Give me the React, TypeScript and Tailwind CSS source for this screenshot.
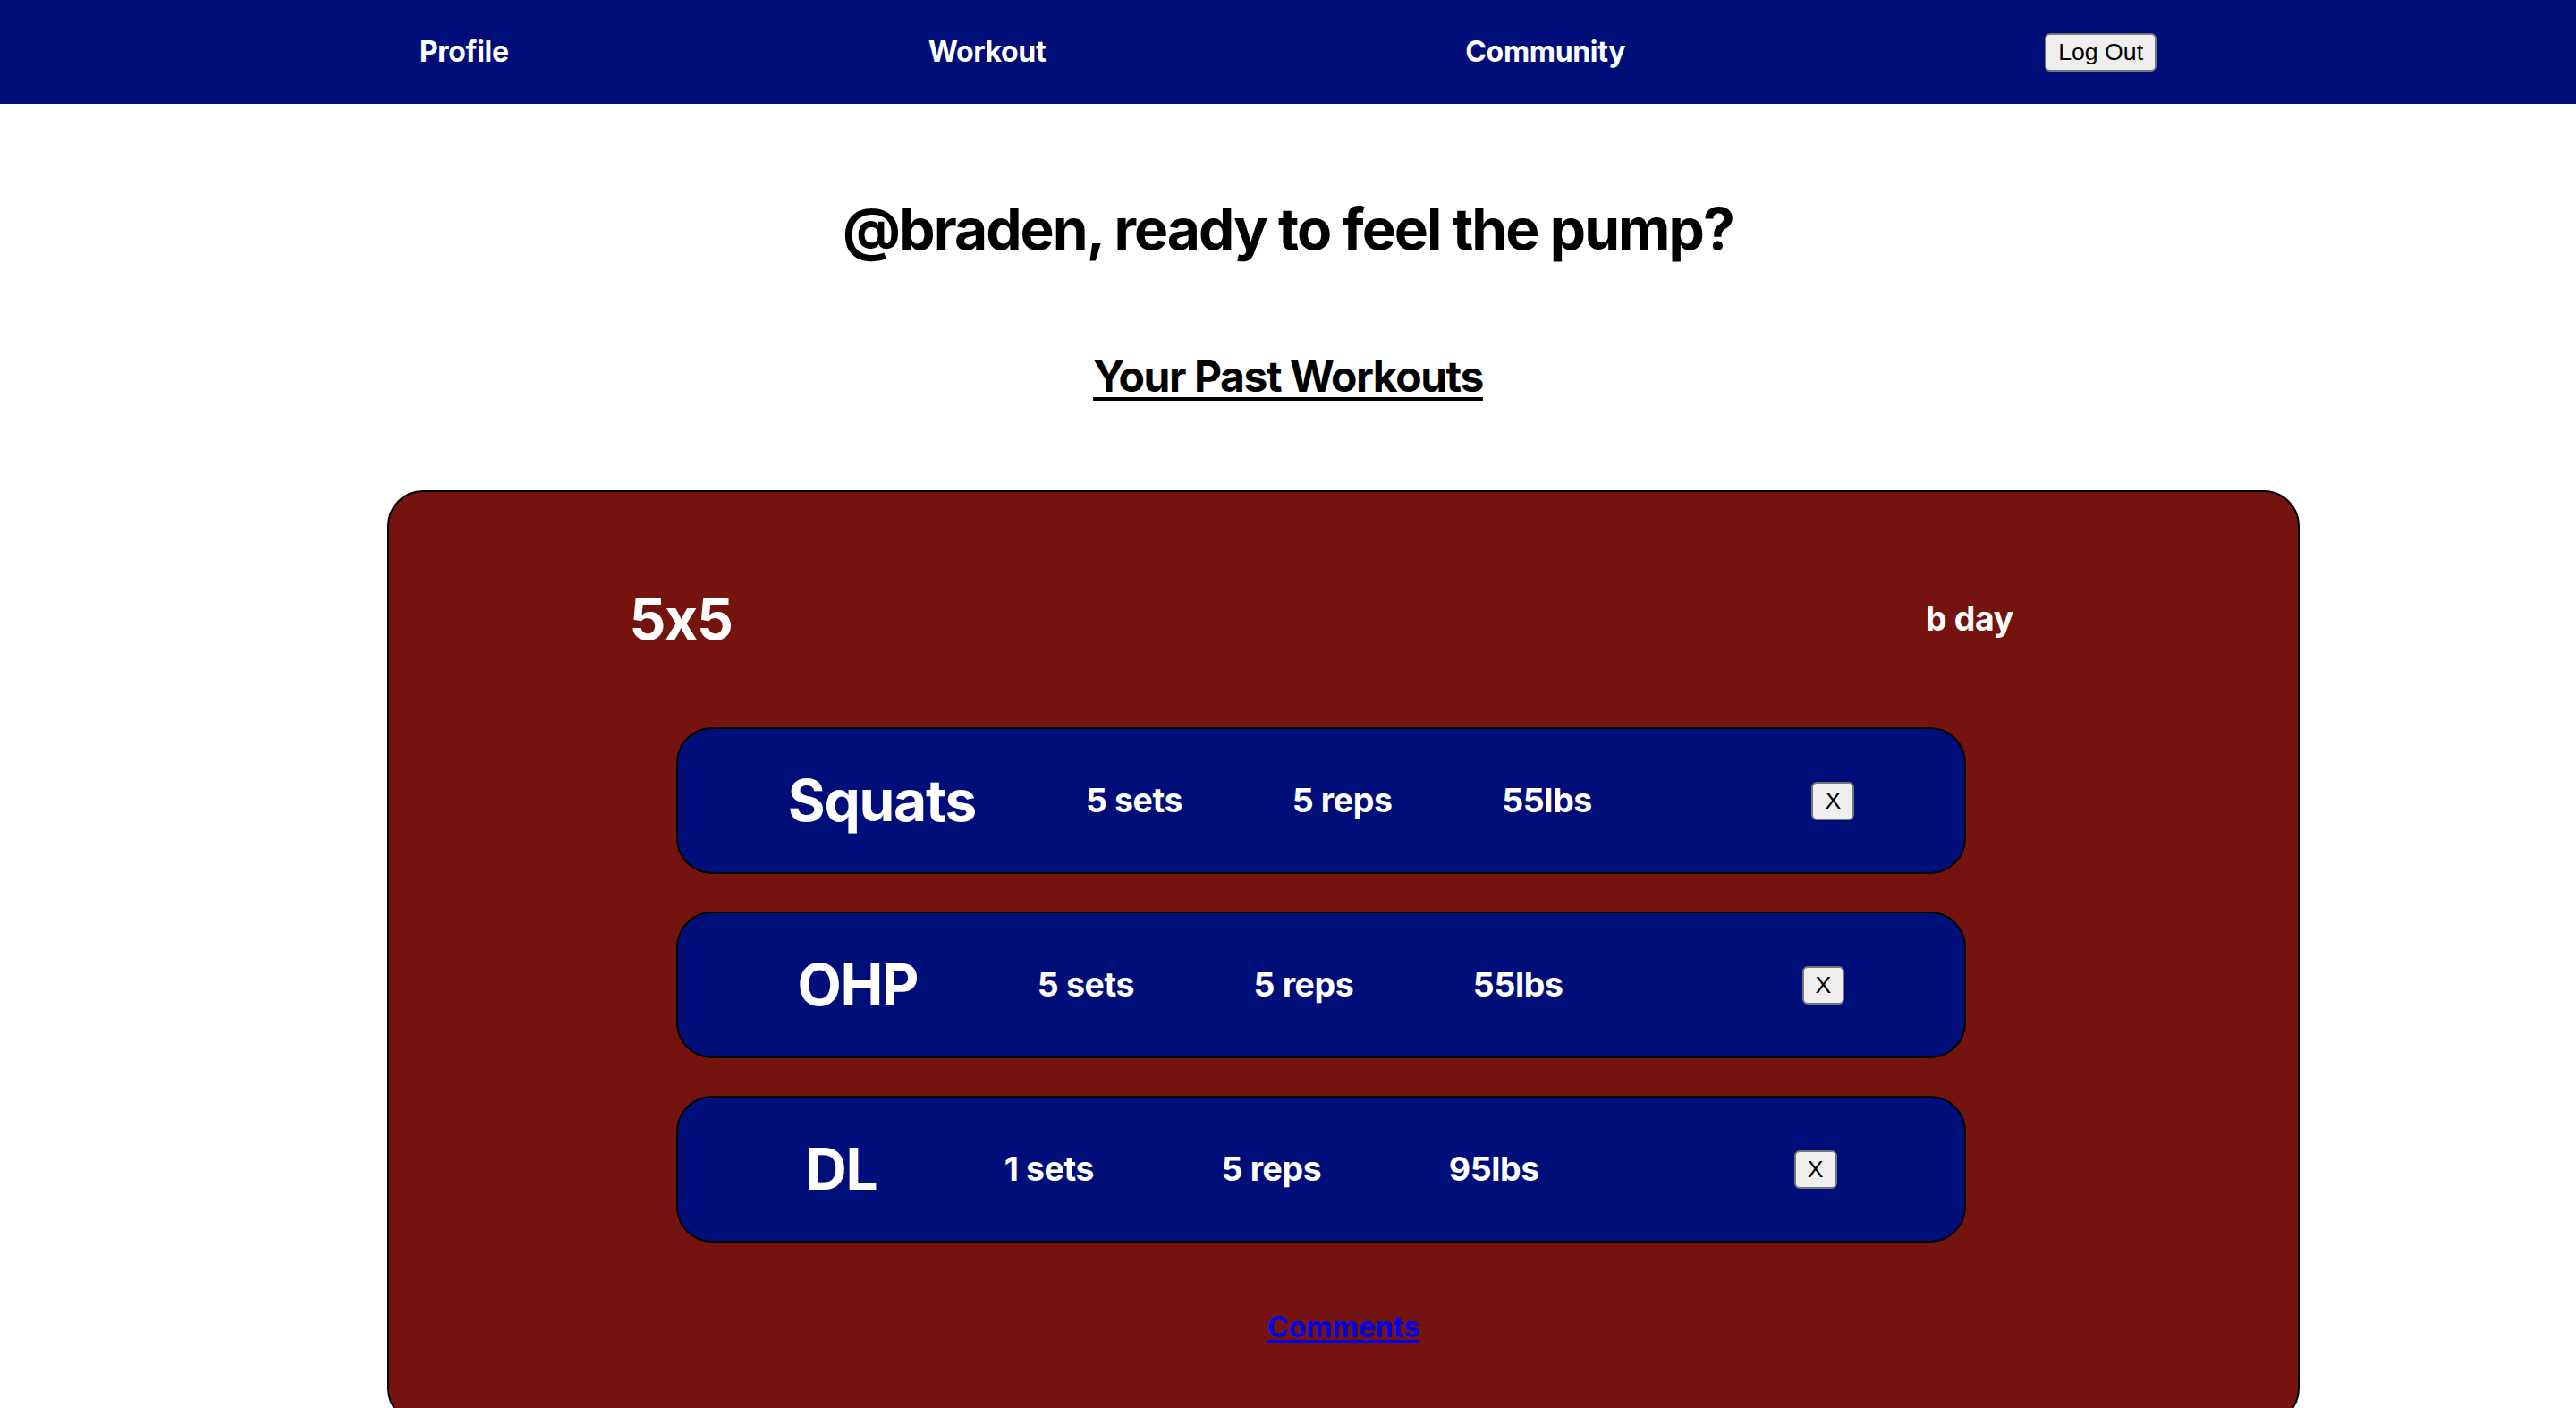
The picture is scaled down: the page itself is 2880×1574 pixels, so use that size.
import React from "react";

const rows = [
  { name: "Squats", sets: "5 sets", reps: "5 reps", lbs: "55lbs" },
  { name: "OHP", sets: "5 sets", reps: "5 reps", lbs: "55lbs" },
  { name: "DL", sets: "1 sets", reps: "5 reps", lbs: "95lbs" },
];

function Btn({ children }: { children: React.ReactNode }) {
  return (
    <button className="rounded-[6px] border-2 border-[#767676] bg-[#efefef] px-[13px] py-[4px] text-[26.67px] leading-[31px] text-black [font-family:'Liberation_Sans',Arial,sans-serif]">
      {children}
    </button>
  );
}

export default function App() {
  return (
    <div className="min-h-[1574px] bg-white [font-family:Inter,'Noto_Sans',sans-serif] [font-feature-settings:'calt'_0]">
      <nav className="flex h-[116px] items-center justify-evenly bg-[#000e7a]">
        <span className="text-[32px] font-bold tracking-[-0.01em] text-white">Profile</span>
        <span className="text-[32px] font-bold tracking-[-0.01em] text-white">Workout</span>
        <span className="text-[32px] font-bold tracking-[-0.01em] text-white">Community</span>
        <Btn>Log Out</Btn>
      </nav>

      <h1 className="mt-[101px] text-center text-[64px] font-bold leading-[77px] tracking-[-0.03em] text-black">
        @braden, ready to feel the pump?
      </h1>
      <h2 className="mt-[98px] text-center text-[48px] font-bold leading-[58px] tracking-[-0.03em] text-black">
        <span className="underline decoration-[4px] underline-offset-[6px]">Your Past Workouts</span>
      </h2>

      <div className="ml-[433px] mt-[98px] h-[1044px] w-[2138px] rounded-[40px] border-2 border-black bg-[#75140e]">
        <div className="mt-[62px] flex h-[160px] items-center pl-[176px]">
          <div className="w-[300px] text-center text-[64px] font-bold tracking-[-0.02em] text-white">5x5</div>
          <div className="ml-[1141px] w-[300px] text-center text-[37.44px] font-bold tracking-[-0.01em] text-white">b day</div>
        </div>

        <div className="ml-[321px] mt-[41px] flex w-[1442px] flex-col gap-[42px]">
          {rows.map((r) => (
            <div
              key={r.name}
              className="flex h-[164px] items-center justify-evenly rounded-[40px] border-2 border-black bg-[#000e7a] text-white"
            >
              <span className="text-[64px] font-bold leading-none tracking-[-0.02em]">{r.name}</span>
              <span className="text-[37.44px] font-bold tracking-[-0.01em]">{r.sets}</span>
              <span className="text-[37.44px] font-bold tracking-[-0.01em]">{r.reps}</span>
              <span className="text-[37.44px] font-bold tracking-[-0.01em]">{r.lbs}</span>
              <span></span>
              <Btn>X</Btn>
            </div>
          ))}
        </div>

        <div className="mt-[75px] text-center text-[32px] font-bold leading-[40px]">
          <a href="#" className="text-[#0000ee] underline decoration-[3px] underline-offset-[3px]">
            Comments
          </a>
        </div>
      </div>
    </div>
  );
}
